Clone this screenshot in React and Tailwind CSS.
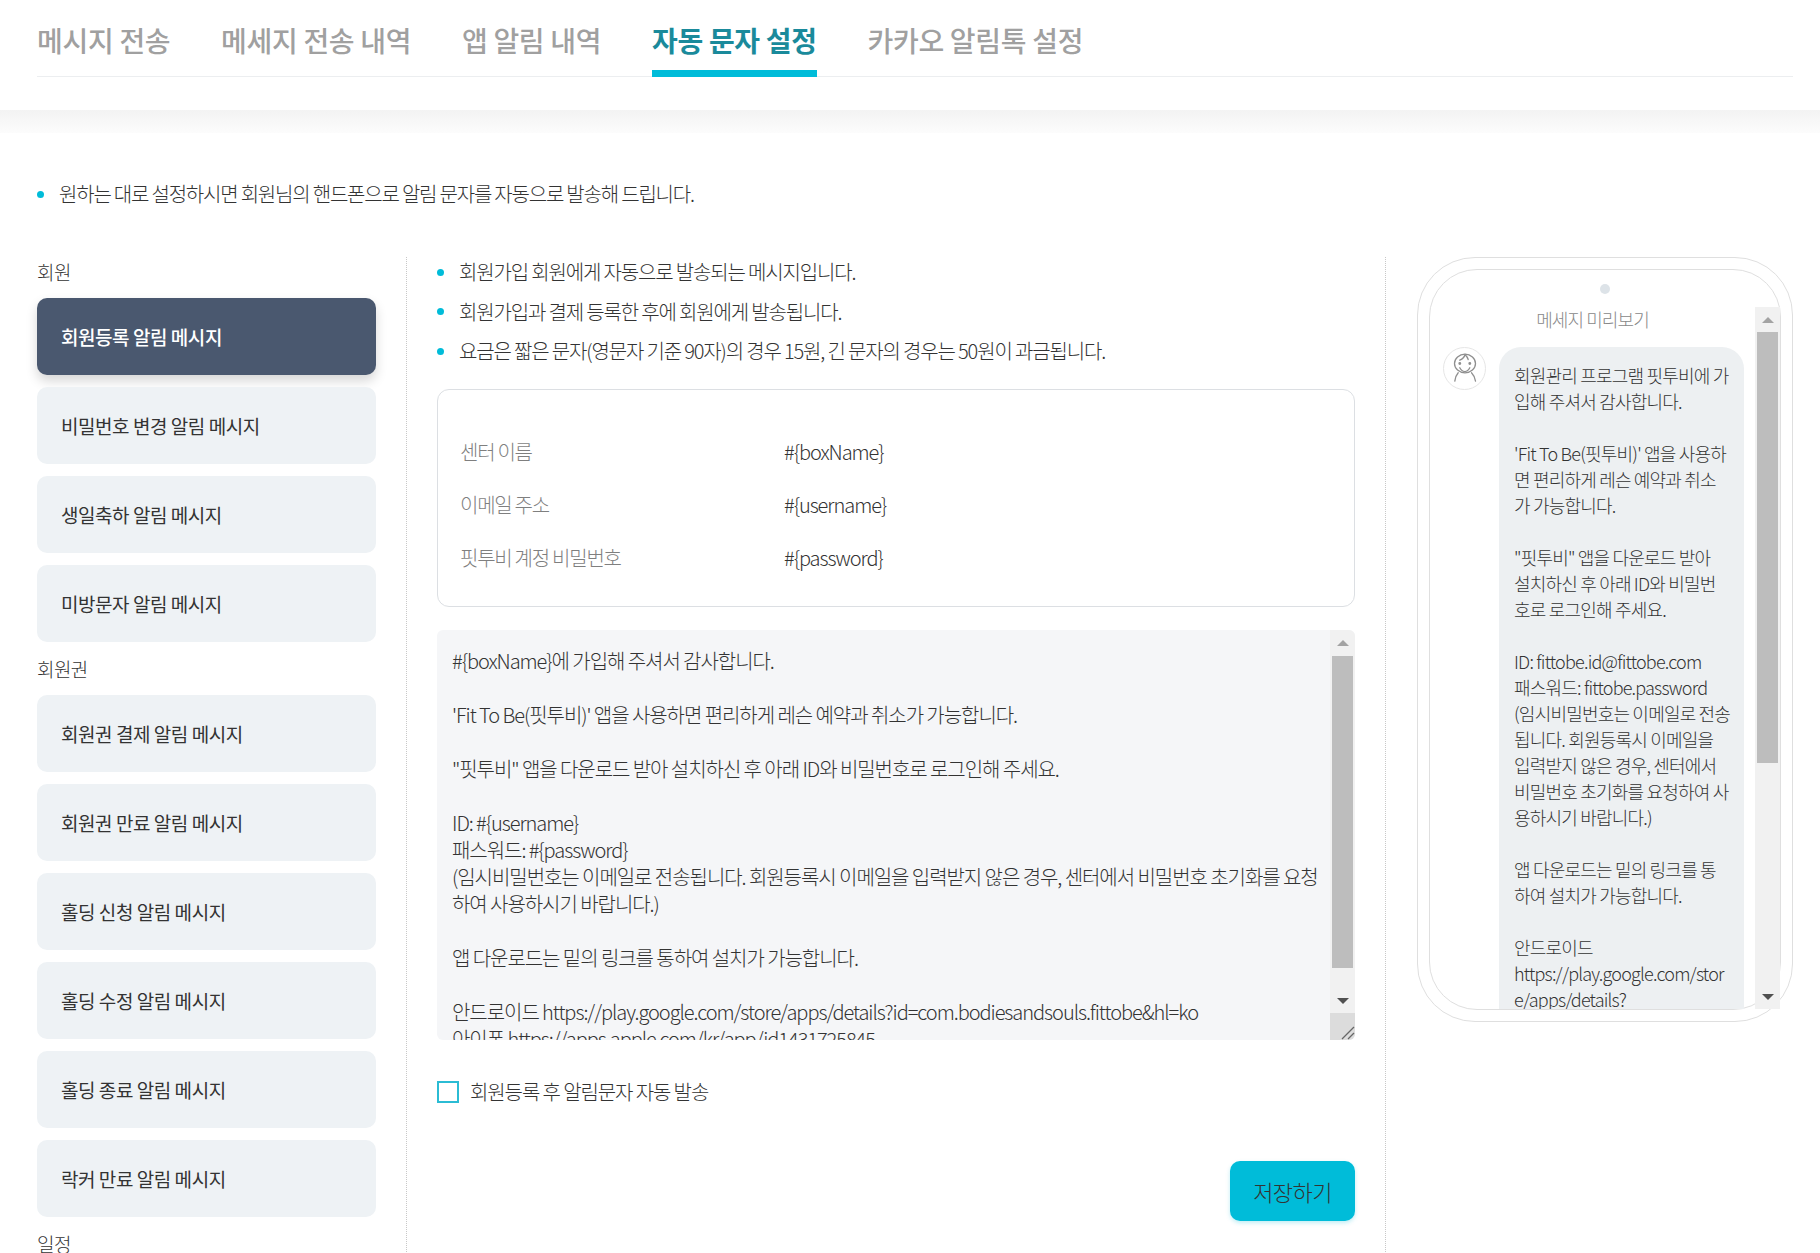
import React from 'react';

const tabs = ['메시지 전송', '메세지 전송 내역', '앱 알림 내역', '자동 문자 설정', '카카오 알림톡 설정'];

const groups = [
  { label: '회원', items: ['회원등록 알림 메시지', '비밀번호 변경 알림 메시지', '생일축하 알림 메시지', '미방문자 알림 메시지'] },
  { label: '회원권', items: ['회원권 결제 알림 메시지', '회원권 만료 알림 메시지', '홀딩 신청 알림 메시지', '홀딩 수정 알림 메시지', '홀딩 종료 알림 메시지', '락커 만료 알림 메시지'] },
  { label: '일정', items: [] },
];

const notes = [
  '회원가입 회원에게 자동으로 발송되는 메시지입니다.',
  '회원가입과 결제 등록한 후에 회원에게 발송됩니다.',
  '요금은 짧은 문자(영문자 기준 90자)의 경우 15원, 긴 문자의 경우는 50원이 과금됩니다.',
];

const variables = [
  ['센터 이름', '#{boxName}'],
  ['이메일 주소', '#{username}'],
  ['핏투비 계정 비밀번호', '#{password}'],
];

const template = `#{boxName}에 가입해 주셔서 감사합니다.

'Fit To Be(핏투비)' 앱을 사용하면 편리하게 레슨 예약과 취소가 가능합니다.

"핏투비" 앱을 다운로드 받아 설치하신 후 아래 ID와 비밀번호로 로그인해 주세요.

ID: #{username}
패스워드: #{password}
(임시비밀번호는 이메일로 전송됩니다. 회원등록시 이메일을 입력받지 않은 경우, 센터에서 비밀번호 초기화를 요청하여 사용하시기 바랍니다.)

앱 다운로드는 밑의 링크를 통하여 설치가 가능합니다.

안드로이드 https://play.google.com/store/apps/details?id=com.bodiesandsouls.fittobe&hl=ko
아이폰 https://apps.apple.com/kr/app/id1431725845`;

// line breaks as the phone preview wraps them
const preview = `회원관리 프로그램 핏투비에 가
입해 주셔서 감사합니다.

'Fit To Be(핏투비)' 앱을 사용하
면 편리하게 레슨 예약과 취소
가 가능합니다.

"핏투비" 앱을 다운로드 받아
설치하신 후 아래 ID와 비밀번
호로 로그인해 주세요.

ID: fittobe.id@fittobe.com
패스워드: fittobe.password
(임시비밀번호는 이메일로 전송
됩니다. 회원등록시 이메일을
입력받지 않은 경우, 센터에서
비밀번호 초기화를 요청하여 사
용하시기 바랍니다.)

앱 다운로드는 밑의 링크를 통
하여 설치가 가능합니다.

안드로이드
https://play.google.com/stor
e/apps/details?`;

const Dot = () => <span className="w-[7px] h-[7px] rounded-full bg-[#00bcd9] shrink-0" />;

// 25px wide classic scrollbar, the picture's native one is scaled up
const ScrollBar = ({ thumbTop, thumbHeight }) => (
  <div className="w-[25px] shrink-0 bg-[#f1f1f1] flex flex-col items-center h-full">
    <div className="h-[25px] shrink-0 flex items-center justify-center">
      <div className="w-0 h-0 border-x-[6px] border-x-transparent border-b-[6px] border-b-[#a3a3a3]" />
    </div>
    <div className="flex-1 w-full px-[2px]" style={{ paddingTop: thumbTop }}>
      <div className="bg-[#bdbdbd] w-full" style={{ height: thumbHeight }} />
    </div>
    <div className="h-[25px] shrink-0 flex items-center justify-center">
      <div className="w-0 h-0 border-x-[6px] border-x-transparent border-t-[6px] border-t-[#505050]" />
    </div>
  </div>
);

const Avatar = () => (
  <div className="w-[43px] h-[43px] rounded-full border border-[#e6e6e6] flex items-center justify-center shrink-0">
    <svg width="30" height="32" viewBox="0 0 30 32" fill="none" stroke="#8f8f8f" strokeWidth="1.3" strokeLinecap="round">
      <ellipse cx="15" cy="10.500" rx="10.500" ry="9.300" />
      <path d="M15 1.500c-.5 2.500-2.500 4.500-5.200 5.700M15 1.500c1.500 1.500 2.700 3 3.200 5" />
      <circle cx="9.800" cy="10.500" r="0.8" fill="#8f8f8f" />
      <circle cx="19.800" cy="10.500" r="0.8" fill="#8f8f8f" />
      <path d="M9.800 14.800c2.500 5 7.500 5 10 0" />
      <path d="M8.200 19.800c-1.800 2-3 5-3.400 8.400M21.500 19.800c2 2 3.500 5 4 8.400" />
    </svg>
  </div>
);

export default function App() {
  return (
    <div className="h-[1253px] overflow-hidden bg-white font-['Noto_Sans_CJK_KR',sans-serif] text-[#333]">
      <header className="h-[110px] pl-[37px] pr-[27px] pt-[17px]">
        <nav className="flex gap-[50.700px] h-[60px] border-b border-[#eceef0]">
          {tabs.map((tab, i) => (
            <div
              key={tab}
              className={`h-[60px] text-[28px] leading-[47px] tracking-[-0.3px] ${
                i === 3 ? 'font-bold text-[#1a8a9b] border-b-[7px] border-[#00bcd9]' : 'font-medium text-[#a0a0a0]'
              }`}
            >
              {tab}
            </div>
          ))}
        </nav>
      </header>
      <div className="h-[23px] bg-gradient-to-b from-[#f3f3f3] to-[#fcfcfc]" />

      <div className="h-[124px] pl-[37px] pt-[47px]">
        <div className="h-[28px] flex items-center gap-[15px]">
          <Dot />
          <span className="text-[20px] font-light leading-[28px] tracking-[-1.2px]">원하는 대로 설정하시면 회원님의 핸드폰으로 알림 문자를 자동으로 발송해 드립니다.</span>
        </div>
      </div>

      <div className="flex pl-[37px] pr-[27px]">
        <aside className="w-[370px] pr-[30px] pt-[2px] border-r border-dotted border-[#c8c8c8] shrink-0 flex flex-col gap-[14px]">
          {groups.map((group, g) => (
            <section key={group.label}>
              <h3 className="h-[26px] mb-[13px] text-[19px] leading-[26px] tracking-[-0.6px] font-light">{group.label}</h3>
              <div className="flex flex-col gap-[12px]">
                {group.items.map((item, i) => (
                  <button
                    key={item}
                    className={`h-[77px] rounded-[10px] pl-[24px] pt-[1px] text-left text-[19px] tracking-[-0.45px] ${
                      g === 0 && i === 0
                        ? 'font-medium bg-[#4a586f] text-white shadow-[0_6px_12px_rgba(0,0,0,0.16)]'
                        : 'font-normal bg-[#eef2f5] text-[#333]'
                    }`}
                  >
                    {item}
                  </button>
                ))}
              </div>
            </section>
          ))}
        </aside>

        <main className="w-[979px] shrink-0 px-[30px] border-r border-dotted border-[#c8c8c8]">
          <ul className="pt-[1px] flex flex-col gap-[11.500px]">
            {notes.map((note) => (
              <li key={note} className="h-[28px] flex items-center gap-[15px] text-[20px] font-light tracking-[-1.15px]">
                <Dot />
                <span>{note}</span>
              </li>
            ))}
          </ul>

          <div className="mt-[24px] h-[218px] border border-[#dcdfe3] rounded-[12px] pl-[22px] pt-[35px]">
            {variables.map(([label, value]) => (
              <div key={label} className="h-[53px] flex items-center text-[20px] font-light">
                <span className="w-[324px] text-[#7f7f7f] tracking-[-1.25px]">{label}</span>
                <span className="tracking-[-1.05px]">{value}</span>
              </div>
            ))}
          </div>

          <div className="mt-[23px] h-[410px] flex rounded-[6px] overflow-hidden bg-[#f5f6f8]">
            <textarea
              readOnly
              value={template}
              className="flex-1 h-full resize-none overflow-hidden outline-none bg-transparent pl-[15px] pr-[8px] pt-[17px] text-[20px] font-light leading-[27px] tracking-[-1.05px] text-[#333]"
            />
            <div className="w-[25px] shrink-0 flex flex-col">
              <div className="h-[383px]">
                <ScrollBar thumbTop={1} thumbHeight={312} />
              </div>
              <div className="flex-1 bg-[#dcdcdc] flex items-end justify-end">
                <svg width="14" height="14" viewBox="0 0 14 14" stroke="#666" strokeWidth="1.300">
                  <path d="M1 13 13 1M7 13 13 7" />
                </svg>
              </div>
            </div>
          </div>

          <label className="mt-[41px] flex items-center gap-[11px] h-[22px]">
            <span className="w-[22px] h-[22px] border-2 border-[#2bbcd4] bg-white shrink-0" />
            <span className="text-[20px] font-light tracking-[-1.1px]">회원등록 후 알림문자 자동 발송</span>
          </label>

          <div className="mt-[58px] flex justify-end">
            <button className="w-[125px] h-[60px] rounded-[10px] bg-[#00bcd9] text-[22px] font-light tracking-[-0.6px] text-[#333] shadow-[0_2px_4px_rgba(0,188,217,0.25)]">
              저장하기
            </button>
          </div>
        </main>

        <aside className="pl-[31px]">
          <div className="w-[376px] h-[765px] border border-[#dfdfdf] rounded-[58px] p-[11px]">
            <div className="h-full border border-[#dfdfdf] rounded-[48px] flex flex-col">
              <div className="h-[37px] shrink-0 flex justify-center pt-[14px]">
                <span className="w-[10px] h-[10px] rounded-full bg-[#dde3e8]" />
              </div>
              <div className="flex-1 min-h-0 flex">
                <div className="flex-1 min-w-0 overflow-hidden">
                  <p className="text-center text-[18px] font-light leading-[24px] tracking-[-0.9px] text-[#888] h-[40px]">메세지 미리보기</p>
                  <div className="flex items-start gap-[13px] pl-[13px]">
                    <Avatar />
                    <div className="w-[245px] rounded-t-[22px] bg-[#edf0f2] pl-[15px] pt-[15px] text-[18px] font-light leading-[26px] tracking-[-0.8px] whitespace-pre">
                      {preview}
                    </div>
                  </div>
                </div>
                <ScrollBar thumbTop={0} thumbHeight={431} />
              </div>
            </div>
          </div>
        </aside>
      </div>
    </div>
  );
}
